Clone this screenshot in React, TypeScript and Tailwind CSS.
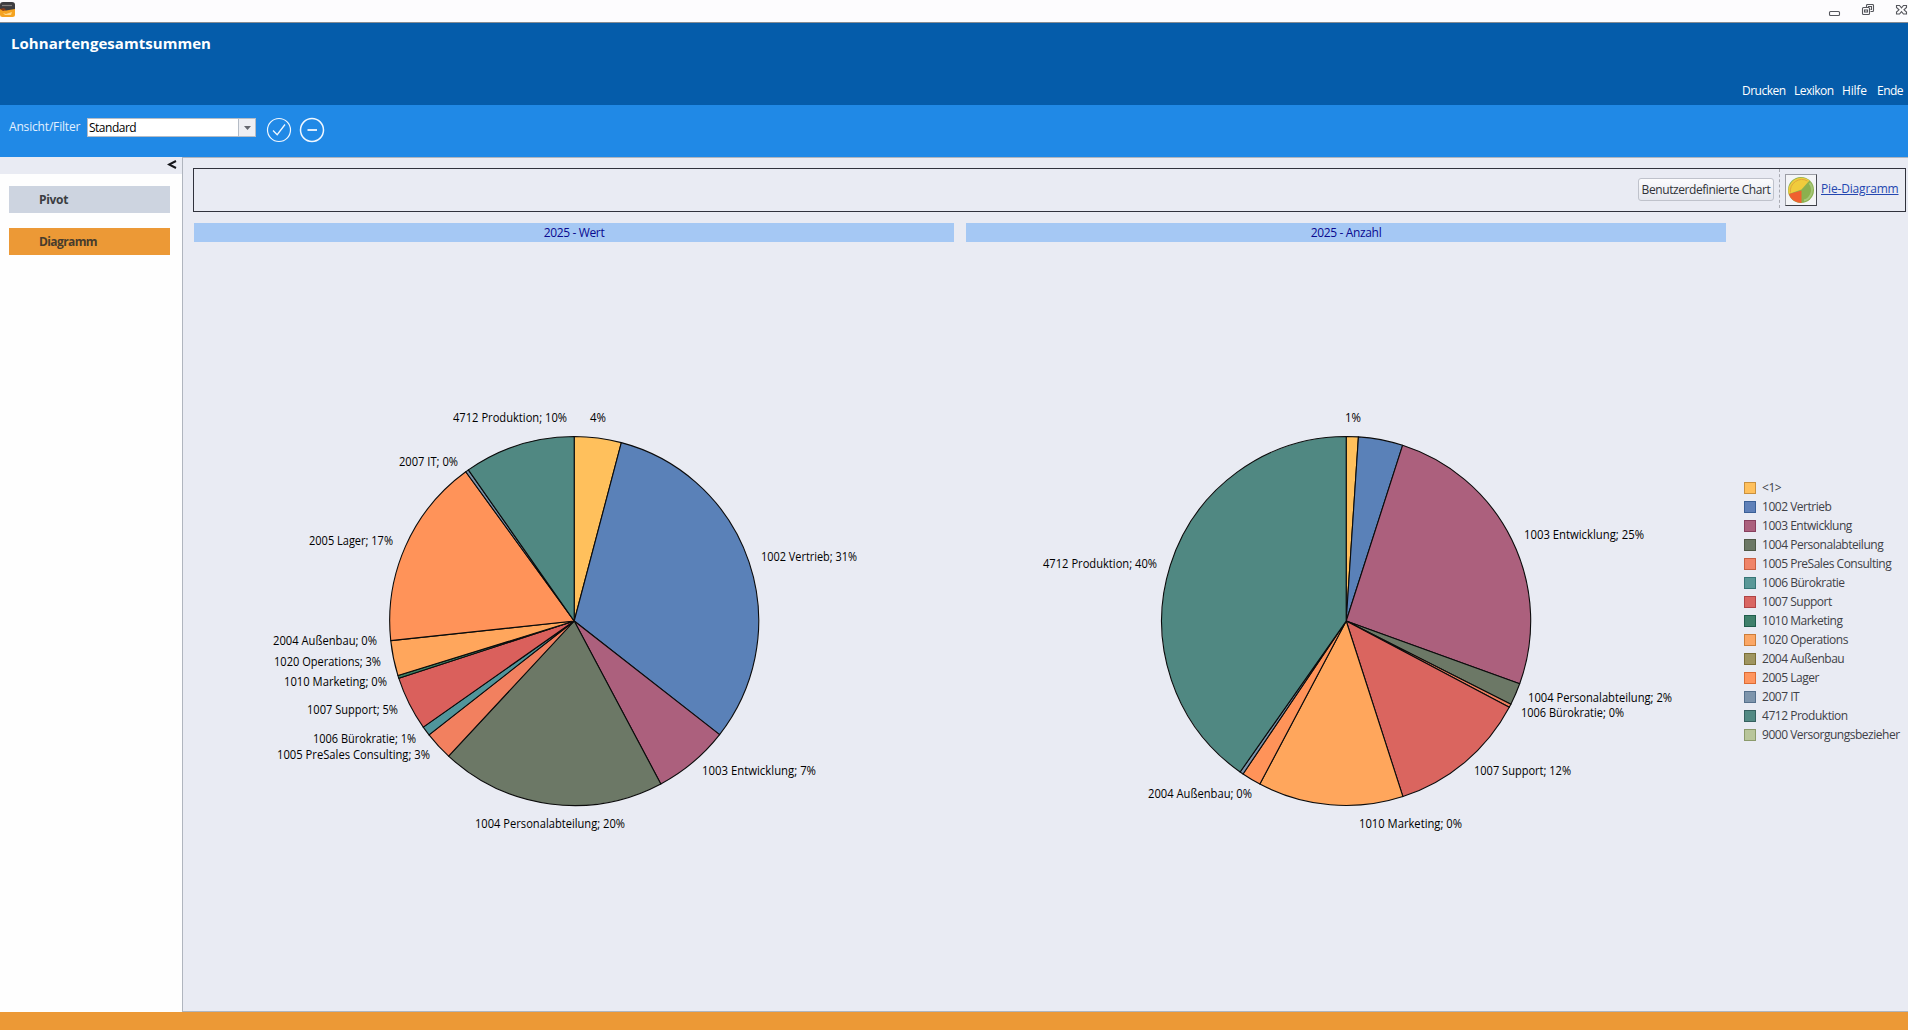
type Slice = { from: number; to: number; color: string };
type Label = { text: string; x: number; y: number; w: number };

const legend = [
  { name: "<1>", box: "bg-[#ffc05c] border-[#c9903e]" },
  { name: "1002 Vertrieb", box: "bg-[#5f80b8] border-[#3a5f96]" },
  { name: "1003 Entwicklung", box: "bg-[#ab607d] border-[#873f5d]" },
  { name: "1004 Personalabteilung", box: "bg-[#6c7866] border-[#4f5946]" },
  { name: "1005 PreSales Consulting", box: "bg-[#f08468] border-[#c85f41]" },
  { name: "1006 Bürokratie", box: "bg-[#5a9898] border-[#367576]" },
  { name: "1007 Support", box: "bg-[#d96662] border-[#b04446]" },
  { name: "1010 Marketing", box: "bg-[#3f806b] border-[#205d4c]" },
  { name: "1020 Operations", box: "bg-[#fba766] border-[#cd7d38]" },
  { name: "2004 Außenbau", box: "bg-[#9f9560] border-[#7b6e36]" },
  { name: "2005 Lager", box: "bg-[#ff955f] border-[#dc6b34]" },
  { name: "2007 IT", box: "bg-[#7e95ac] border-[#56708c]" },
  { name: "4712 Produktion", box: "bg-[#528983] border-[#35605f]" },
  { name: "9000 Versorgungsbezieher", box: "bg-[#b8c59a] border-[#8b9a6b]" },
];

const wertSlices: Slice[] = [
  { from: 0, to: 14.8, color: "#ffc05c" },
  { from: 14.8, to: 128, color: "#5a81b8" },
  { from: 128, to: 152, color: "#ac607d" },
  { from: 152, to: 222.9, color: "#6c7866" },
  { from: 222.9, to: 231.9, color: "#f2805f" },
  { from: 231.9, to: 234.9, color: "#50959b" },
  { from: 234.9, to: 251.9, color: "#da605c" },
  { from: 251.9, to: 252.8, color: "#3a8063" },
  { from: 252.8, to: 263.9, color: "#ffa65c" },
  { from: 263.9, to: 324, color: "#ff9359" },
  { from: 324, to: 325, color: "#7b93ab" },
  { from: 325, to: 360, color: "#508882" },
];

const anzahlSlices: Slice[] = [
  { from: 0, to: 3.8, color: "#ffc05c" },
  { from: 3.8, to: 17.8, color: "#5a81b8" },
  { from: 17.8, to: 109.9, color: "#ac607d" },
  { from: 109.9, to: 116.8, color: "#6c7866" },
  { from: 116.8, to: 117.9, color: "#f2805f" },
  { from: 117.9, to: 162.1, color: "#da655f" },
  { from: 162.1, to: 207.9, color: "#ffa65c" },
  { from: 207.9, to: 214, color: "#ff9359" },
  { from: 214, to: 215.1, color: "#7b93ab" },
  { from: 215.1, to: 360, color: "#508882" },
];

const wertLabels: Label[] = [
  { text: "4712 Produktion; 10%", x: 259, y: 180, w: 114 },
  { text: "4%", x: 396, y: 180, w: 16 },
  { text: "2007 IT; 0%", x: 205, y: 224, w: 59 },
  { text: "2005 Lager; 17%", x: 115, y: 303, w: 84 },
  { text: "2004 Außenbau; 0%", x: 79, y: 403, w: 104 },
  { text: "1020 Operations; 3%", x: 80, y: 424, w: 107 },
  { text: "1010 Marketing; 0%", x: 90, y: 444, w: 103 },
  { text: "1007 Support; 5%", x: 113, y: 472, w: 91 },
  { text: "1006 Bürokratie; 1%", x: 119, y: 501, w: 103 },
  { text: "1005 PreSales Consulting; 3%", x: 83, y: 517, w: 153 },
  { text: "1004 Personalabteilung; 20%", x: 281, y: 586, w: 150 },
  { text: "1002 Vertrieb; 31%", x: 567, y: 319, w: 96 },
  { text: "1003 Entwicklung; 7%", x: 508, y: 533, w: 114 },
];

const anzahlLabels: Label[] = [
  { text: "1%", x: 379, y: 180, w: 16 },
  { text: "4712 Produktion; 40%", x: 77, y: 326, w: 114 },
  { text: "2004 Außenbau; 0%", x: 182, y: 556, w: 104 },
  { text: "1010 Marketing; 0%", x: 393, y: 586, w: 103 },
  { text: "1003 Entwicklung; 25%", x: 558, y: 297, w: 120 },
  { text: "1004 Personalabteilung; 2%", x: 562, y: 460, w: 144 },
  { text: "1006 Bürokratie; 0%", x: 555, y: 475, w: 103 },
  { text: "1007 Support; 12%", x: 508, y: 533, w: 97 },
];

const CX = 380.2;
const CY = 379;
const R = 184.5;

function point(deg: number) {
  const a = (deg * Math.PI) / 180;
  return `${(CX + R * Math.sin(a)).toFixed(2)} ${(CY - R * Math.cos(a)).toFixed(2)}`;
}

function slicePath({ from, to }: Slice) {
  const large = to - from > 180 ? 1 : 0;
  return `M${CX} ${CY}L${point(from)}A${R} ${R} 0 ${large} 1 ${point(to)}Z`;
}

const PieChart = ({ title, slices, labels }: { title: string; slices: Slice[]; labels: Label[] }) => (
  <div className="flex w-[760px] shrink-0 flex-col">
    <h2 className="flex h-[19px] items-center justify-center bg-[#a5c8f4] text-[12px] tracking-[-0.35px] text-[#0a0a90]">
      {title}
    </h2>
    <svg width="760" height="766" viewBox="0 0 760 766" className="block">
      {slices.map((s) => (
        <path key={s.from} d={slicePath(s)} fill={s.color} stroke="#0b0b0b" strokeWidth="1.1" strokeLinejoin="round" />
      ))}
      {labels.map((l) => (
        <text
          key={l.text}
          x={l.x}
          y={l.y}
          textLength={l.w}
          lengthAdjust="spacingAndGlyphs"
          className="fill-black text-[12px]"
        >
          {l.text}
        </text>
      ))}
    </svg>
  </div>
);

const AppIcon = () => (
  <svg width="16" height="16" viewBox="0 0 16 16">
    <rect x="0" y="1" width="15" height="14" rx="2.5" fill="#f5a321" />
    <path d="M0 7V3Q0 0 3 0h9q3 0 3 3v4L6 8.500Z" fill="#3d3c40" />
    <path d="M2 3.500h10" stroke="#85807f" strokeWidth="1.200" />
    <path d="M0 7l4-1 2 2-3 1z" fill="#8e3d17" />
    <path d="M3 11l3 1 6-2-1 3H5z" fill="#ffd98b" />
  </svg>
);

const WindowButtons = () => (
  <svg width="80" height="14" viewBox="0 0 80 14" fill="none" stroke="#55565c" strokeWidth="1.1">
    <rect x="1.500" y="7.500" width="10" height="4" rx="1" />
    <path d="M38.500 3.500v-2q0-1 1-1h5q1 0 1 1v5q0 1-1 1h-2" />
    <path d="M40.500 3.500v-1h3v3h-1" />
    <rect x="34.500" y="3.500" width="7" height="7" rx="1" />
    <rect x="36.500" y="6" width="3" height="2" />
    <path d="M68.500 1.500h3l2 2.300 2-2.300h3v2L76 5.800l2.500 2.200v2h-3l-2-2.300-2 2.300h-3V8L71 5.800 68.500 3.500z" />
  </svg>
);

export default function App() {
  return (
    <div className="flex h-[1030px] w-[1908px] flex-col overflow-hidden bg-white font-['Open_Sans','Noto_Sans',sans-serif] text-[12px] leading-4">
      {/* Title bar */}
      <div className="flex h-[23px] shrink-0 justify-between border-b border-[#858b92] bg-[#fdfcfe]">
        <div className="pt-[2px]">
          <AppIcon />
        </div>
        <div className="pt-[4px]">
          <WindowButtons />
        </div>
      </div>

      {/* Header */}
      <header className="flex h-[82px] shrink-0 flex-col justify-between bg-[#055caa] text-white">
        <h1 className="pt-[10px] pl-[11px] text-[15px] leading-5 font-bold tracking-[0.04px]">Lohnartengesamtsummen</h1>
        <nav className="flex justify-end pr-[5px] pb-[6px] tracking-[-0.5px]">
          <a className="w-[52px]">Drucken</a>
          <a className="w-[48px]">Lexikon</a>
          <a className="w-[35px] tracking-[-0.2px]">Hilfe</a>
          <a className="w-[26px]">Ende</a>
        </nav>
      </header>

      {/* Filter bar */}
      <div className="flex h-[52px] shrink-0 items-start bg-[#2089e6]">
        <span className="w-[78px] pt-[14px] pl-[9px] tracking-[-0.17px] text-[#e2f0ff]">Ansicht/Filter</span>
        <div className="mt-[13px] ml-[9px] flex h-[19px] w-[169px] border border-[#b5bcc6] bg-white text-black">
          <span className="flex-1 pl-px leading-[17px] tracking-[-0.5px]">Standard</span>
          <span className="flex w-[17px] items-center justify-center border-l border-[#b5bcc6] bg-[#eeeff3]">
            <svg width="7" height="4" viewBox="0 0 7 4">
              <path d="M0 0h7L3.500 4z" fill="#65676e" />
            </svg>
          </span>
        </div>
        <svg width="60" height="26" viewBox="0 0 60 26" className="mt-[12px] ml-[10px]" fill="none" stroke="#f1f8ff">
          <circle cx="13" cy="13" r="11.500" strokeWidth="1.200" />
          <path d="M7 13.500l4.200 4.200L19 7.500" strokeWidth="1.300" />
          <circle cx="46" cy="13" r="11.500" strokeWidth="1.500" />
          <path d="M41.500 13h9.500" strokeWidth="1.800" />
        </svg>
      </div>

      <div className="flex h-[855px] shrink-0">
        {/* Sidebar */}
        <aside className="w-[182px] shrink-0 bg-[#fefefe]">
          <div className="flex h-[17px] justify-end bg-[#e9ebf3] pt-[3px] pr-[5px]">
            <svg width="10" height="10" viewBox="0 0 10 10">
              <path d="M9 1L2 4.500 9 8" fill="none" stroke="#15161a" strokeWidth="2" />
            </svg>
          </div>
          <div className="flex flex-col gap-[15px] pt-3 pl-[9px] text-[12px] leading-[27px] font-bold tracking-[-0.3px] text-[#3b3d42]">
            <div className="h-[27px] w-[161px] bg-[#cdd4e0] pl-[30px]">Pivot</div>
            <div className="h-[27px] w-[161px] bg-[#ec9936] pl-[30px] tracking-[-0.6px] text-[#483c2c]">Diagramm</div>
          </div>
        </aside>

        {/* Chart area */}
        <main className="flex flex-1 flex-col border-t border-b border-l border-[#b0b5be] bg-[#e9ebf3]">
          <div className="mt-[10px] mr-[2px] ml-[10px] flex h-[44px] shrink-0 justify-end border border-[#30323c]">
            <button className="mt-[9px] h-[23px] w-[136px] rounded-[3px] border border-[#bfc2cb] bg-linear-to-b from-[#fbfbfd] to-[#e5e7ee] leading-[19px] tracking-[-0.42px] whitespace-nowrap text-[#303237]">
              Benutzerdefinierte Chart
            </button>
            <div className="ml-[5px] h-[39px] border-l border-dashed border-[#a9abb3]" />
            <div className="mt-[5px] ml-[5px] flex size-8 items-center justify-center border border-t-[#9c9ea5] border-r-[#4b4d54] border-b-[#3c3e45] border-l-[#9c9ea5] bg-[#f4f5f7]">
              <svg width="28" height="28" viewBox="0 0 28 28">
                <circle cx="14" cy="14" r="13" fill="#8bb04e" />
                <path d="M14.500 13.500L1.800 18A13 13 0 0 1 22.500 4.500z" fill="#f0cc3c" />
                <path d="M14.500 14.500V27A13 13 0 0 1 1.800 18z" fill="#f0602f" />
                <path d="M3.500 16.500A11.500 11.500 0 0 1 20.500 5" fill="none" stroke="#dfa83b" strokeWidth="1" />
                <path d="M22.500 7A11 11 0 0 1 17 24.500" fill="none" stroke="#a5c777" strokeWidth="2" />
              </svg>
            </div>
            <a className="mt-[11px] mr-[7px] ml-[4px] w-[77px] text-[12px] leading-[18px] tracking-[-0.17px] whitespace-nowrap text-[#2447b0] underline">
              Pie-Diagramm
            </a>
          </div>

          <div className="mt-[11px] flex gap-3 pl-[11px]">
            <PieChart title="2025 - Wert" slices={wertSlices} labels={wertLabels} />
            <PieChart title="2025 - Anzahl" slices={anzahlSlices} labels={anzahlLabels} />
            <ul className="ml-[6px] pt-[255px]">
              {legend.map((item) => (
                <li key={item.name} className="flex h-[19px] items-center gap-[6px]">
                  <span className={`size-3 shrink-0 border ${item.box}`} />
                  <span className="tracking-[-0.48px] whitespace-nowrap text-[#404147]">{item.name}</span>
                </li>
              ))}
            </ul>
          </div>
        </main>
      </div>

      <footer className="flex-1 bg-[#ec9936]" />
    </div>
  );
}
